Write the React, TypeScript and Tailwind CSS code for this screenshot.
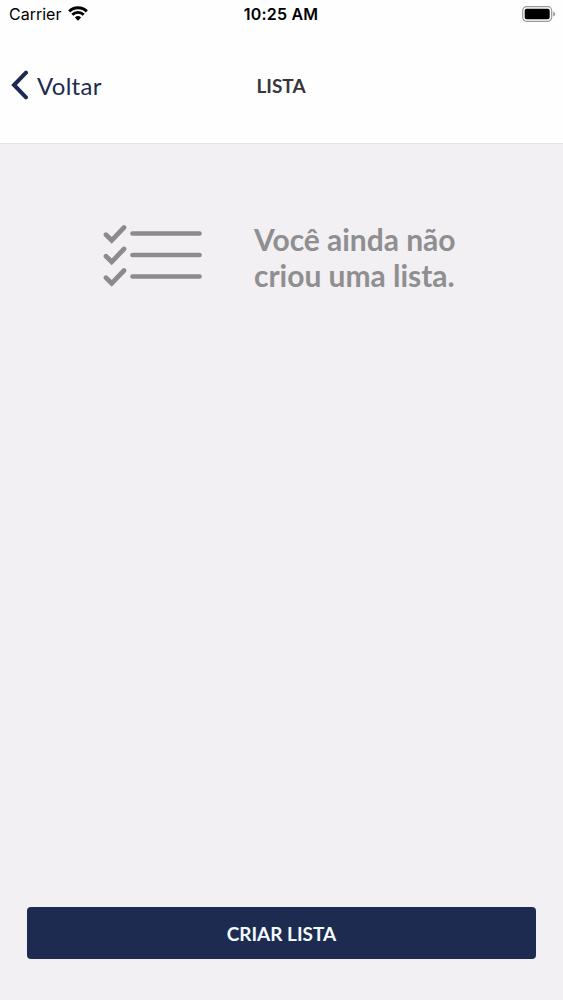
export default function App() {
  return (
    <div className="flex h-[1000px] w-[563px] flex-col overflow-hidden bg-[#f2f0f3] font-['Lato',sans-serif]">
      <header className="h-[144px] shrink-0 border-b border-[#e3e2e5] bg-[#fefefe]">
        <div className="grid h-7 grid-cols-3 items-center pl-[9px] pr-[7px] font-['Inter',sans-serif] text-black">
          <div className="flex items-center gap-[7px]">
            <span className="text-[16px]">Carrier</span>
            <svg className="-mt-[2px]" width="20" height="15" viewBox="0 0 20 15" fill="none" stroke="#000" strokeWidth="2.900">
              <path d="M1.200 5.400a12.500 12.500 0 0 1 17.600 0M4.300 8.800a8 8 0 0 1 11.400 0" />
              <path d="M10 14.800 6.900 11.500a4.500 4.500 0 0 1 6.200 0z" fill="#000" stroke="none" />
            </svg>
          </div>
          <span className="pr-[3px] text-center text-[16px] font-semibold tracking-[0.200px]">10:25 AM</span>
          <svg className="justify-self-end" width="34" height="16" viewBox="0 0 34 16">
            <rect x=".7" y=".7" width="29" height="14.600" rx="4" fill="none" stroke="#999" strokeWidth="1.200" />
            <rect x="2.700" y="2.700" width="25" height="10.600" rx="2" />
            <path d="M31.200 5.500v5q2-.7 2-2.500t-2-2.500" fill="#999" />
          </svg>
        </div>
        <div className="grid h-[115px] grid-cols-3 items-center px-[11px]">
          <button className="flex items-center gap-2 text-[24px] text-[#1d2b53]">
            <svg className="-mt-[2px]" width="18" height="30" viewBox="0 0 18 30" fill="none" stroke="currentColor" strokeWidth="4" strokeLinecap="round">
              <path d="M15 2.700 3 15l12 12.300" />
            </svg>
            <span className="tracking-[0.300px]">Voltar</span>
          </button>
          <h1 className="pr-px pt-px text-center text-[19px] font-bold text-[#38353c]">LISTA</h1>
        </div>
      </header>
      <main className="flex flex-1 flex-col justify-between px-[27px] pb-[41px] pt-[77px]">
        <section className="flex items-start pl-[76px]">
          <svg className="mt-px" width="100" height="66" viewBox="0 0 100 66" fill="none" stroke="#8c8a8c" strokeWidth="4.700" strokeLinecap="round">
            <path d="m3 12.700 5.700 5.600L21 5.500M3 34.200l5.700 5.600L21 27M3 55.700l5.700 5.600L21 48.500" />
            <path d="M29.500 11.500H96.500M29.500 33H96.500M29.500 54.500H96.500" />
          </svg>
          <p className="ml-[51px] text-[30px] font-bold leading-9 tracking-[-0.030px] text-[#8f8f91]">Você ainda não<br />criou uma lista.</p>
        </section>
        <button className="h-[52px] rounded bg-[#1d2b50] pt-[2px] text-[19px] font-bold text-[#f3fbff]">CRIAR LISTA</button>
      </main>
    </div>
  );
}
